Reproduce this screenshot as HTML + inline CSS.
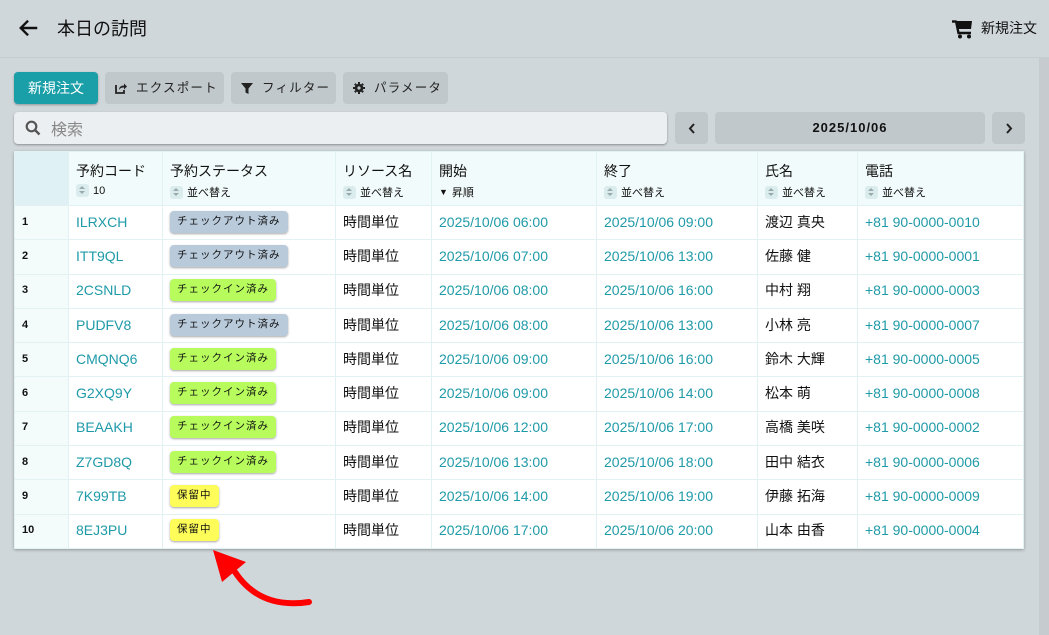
<!DOCTYPE html>
<html><head><meta charset="utf-8"><style>
*{box-sizing:border-box;margin:0;padding:0}
body{width:1049px;height:635px;background:#d0d7da;font-family:"Liberation Sans","Noto Sans CJK JP",sans-serif;position:relative;overflow:hidden;color:#111}
.hdr{position:absolute;left:0;top:0;width:1049px;height:58px;border-bottom:1px solid #c4ccd0}
.title{position:absolute;left:57px;top:15px;font-size:18px;color:#111}
.cart{position:absolute;left:981px;top:18px;font-size:14px}
.sb{position:absolute;left:1039px;top:58px;width:10px;height:577px;background:#c5cbce}
.btn{position:absolute;top:72px;height:32px;border-radius:4px;background:#c1c8cb;font-size:12.5px;letter-spacing:1.2px;line-height:32px;color:#222;white-space:nowrap;display:flex;align-items:center}
.btn svg{margin-right:9px}
.search{position:absolute;left:14px;top:112px;width:653px;height:32px;background:#ebeff1;border-radius:4px;box-shadow:0 1px 2px rgba(0,0,0,.35)}
.nav{position:absolute;top:112px;height:32px;background:#c1c8cb;border-radius:4px;text-align:center;line-height:32px;font-size:13px;font-weight:bold;letter-spacing:1px}
.nav svg{margin-top:11px}
table{position:absolute;left:14px;top:151px;width:1010px;border-collapse:collapse;background:#fff;box-shadow:0 1px 3px rgba(0,0,0,.3)}
td,th{border:1px solid #e2f1f2;text-align:left;font-weight:normal;padding:0 7px;font-size:14px;white-space:nowrap}
th{height:54px;background:#f2fbfb;vertical-align:top;padding-top:9px;font-size:14px}
th .s{font-size:11px;margin-top:3px;display:flex;align-items:center;gap:4px}
th .s i{display:inline-block;width:13px;height:13px;background:#dbecef;border-radius:3px;position:relative}
th .s i:before{content:"";position:absolute;left:3px;top:2px;border:3.5px solid transparent;border-bottom:3.5px solid #9aa;border-top:none}
th .s i:after{content:"";position:absolute;left:3px;top:7px;border:3.5px solid transparent;border-top:3.5px solid #9aa;border-bottom:none}
td{height:34.3px;padding-bottom:2px}
td.i{background:#f3fbfb;font-size:11px;font-weight:bold;width:54px}
th.i{background:#dff1f5}
.t{color:#1f9aa8}
.b{display:inline-block;font-size:10.5px;letter-spacing:1px;padding:0 7px;height:22px;line-height:21px;border-radius:4px;box-shadow:0 1px 2px rgba(0,0,0,.35)}
.o{background:#b9cadb}.g{background:#b7fc5c}.y{background:#fdfc58}
</style></head><body>
<div class="hdr"></div>
<svg style="position:absolute;left:18px;top:17px" width="22" height="22" viewBox="0 0 24 24"><path d="M21 12H4M11 4l-8 8 8 8" stroke="#111" stroke-width="2.6" fill="none"/></svg>
<div class="title">本日の訪問</div>
<svg style="position:absolute;left:952px;top:20px" width="22" height="19" viewBox="0 0 22 19"><path d="M0 1.5h4.5" stroke="#111" stroke-width="2.4"/><path d="M4 1h16l-1 8H6z" fill="#111"/><path d="M4 1l2.5 12H19" stroke="#111" stroke-width="2.4" fill="none"/><circle cx="8" cy="16.5" r="2" fill="#111"/><circle cx="17" cy="16.5" r="2" fill="#111"/></svg>
<div class="cart">新規注文</div>
<div class="sb"></div>
<div class="btn" style="left:14px;width:84px;background:#1a9fa8;color:#fff;justify-content:center;letter-spacing:0;font-size:14px;box-shadow:0 1px 2px rgba(0,0,0,.3)">新規注文</div>
<div class="btn" style="left:105px;width:119px;padding-left:10px"><svg width="12" height="12" viewBox="0 0 12 12"><path d="M1 3v8h8V8" stroke="#222" stroke-width="1.8" fill="none"/><path d="M4 8c0-3 2-4.5 5-4.5V1.5l3 3-3 3V5.5C7 5.5 5 6 4 8z" fill="#222"/></svg>エクスポート</div>
<div class="btn" style="left:231px;width:105px;padding-left:10px"><svg width="12" height="12" viewBox="0 0 12 12"><path d="M0 1h12L7.5 6.5V12l-3-1.5V6.5z" fill="#222"/></svg>フィルター</div>
<div class="btn" style="left:343px;width:105px;padding-left:10px"><svg width="12" height="12" viewBox="0 0 12 12"><circle cx="6" cy="6" r="4.3" fill="#222"/><path d="M6 0v12M0 6h12M1.8 1.8l8.4 8.4M10.2 1.8l-8.4 8.4" stroke="#222" stroke-width="2"/><circle cx="6" cy="6" r="1.6" fill="#c1c8cb"/></svg>パラメータ</div>
<div class="search"><svg style="position:absolute;left:11px;top:8px" width="16" height="16" viewBox="0 0 16 16"><circle cx="6.5" cy="6.5" r="4.8" stroke="#555" stroke-width="2.2" fill="none"/><path d="M10 10l4.5 4.5" stroke="#555" stroke-width="2.4"/></svg><span style="position:absolute;left:37px;top:4px;font-size:16px;color:#888">検索</span></div>
<div class="nav" style="left:675px;width:33px"><svg width="8" height="11" viewBox="0 0 8 11"><path d="M6 1L2 5.5 6 10" stroke="#222" stroke-width="2" fill="none"/></svg></div>
<div class="nav" style="left:715px;width:270px">2025/10/06</div>
<div class="nav" style="left:992px;width:33px"><svg width="8" height="11" viewBox="0 0 8 11"><path d="M2 1l4 4.5L2 10" stroke="#222" stroke-width="2" fill="none"/></svg></div>
<table>
<tr><th class="i"></th><th style="width:94px">予約コード<div class="s"><i></i>10</div></th><th style="width:173px">予約ステータス<div class="s"><i></i>並べ替え</div></th><th style="width:96px">リソース名<div class="s"><i></i>並べ替え</div></th><th style="width:165px">開始<div class="s"><span style="font-size:9px">▼</span>昇順</div></th><th style="width:161px">終了<div class="s"><i></i>並べ替え</div></th><th style="width:100px">氏名<div class="s"><i></i>並べ替え</div></th><th>電話<div class="s"><i></i>並べ替え</div></th></tr>
<tr><td class="i">1</td><td class="t">ILRXCH</td><td><span class="b o">チェックアウト済み</span></td><td>時間単位</td><td class="t">2025/10/06 06:00</td><td class="t">2025/10/06 09:00</td><td>渡辺 真央</td><td class="t">+81 90-0000-0010</td></tr>
<tr><td class="i">2</td><td class="t">ITT9QL</td><td><span class="b o">チェックアウト済み</span></td><td>時間単位</td><td class="t">2025/10/06 07:00</td><td class="t">2025/10/06 13:00</td><td>佐藤 健</td><td class="t">+81 90-0000-0001</td></tr>
<tr><td class="i">3</td><td class="t">2CSNLD</td><td><span class="b g">チェックイン済み</span></td><td>時間単位</td><td class="t">2025/10/06 08:00</td><td class="t">2025/10/06 16:00</td><td>中村 翔</td><td class="t">+81 90-0000-0003</td></tr>
<tr><td class="i">4</td><td class="t">PUDFV8</td><td><span class="b o">チェックアウト済み</span></td><td>時間単位</td><td class="t">2025/10/06 08:00</td><td class="t">2025/10/06 13:00</td><td>小林 亮</td><td class="t">+81 90-0000-0007</td></tr>
<tr><td class="i">5</td><td class="t">CMQNQ6</td><td><span class="b g">チェックイン済み</span></td><td>時間単位</td><td class="t">2025/10/06 09:00</td><td class="t">2025/10/06 16:00</td><td>鈴木 大輝</td><td class="t">+81 90-0000-0005</td></tr>
<tr><td class="i">6</td><td class="t">G2XQ9Y</td><td><span class="b g">チェックイン済み</span></td><td>時間単位</td><td class="t">2025/10/06 09:00</td><td class="t">2025/10/06 14:00</td><td>松本 萌</td><td class="t">+81 90-0000-0008</td></tr>
<tr><td class="i">7</td><td class="t">BEAAKH</td><td><span class="b g">チェックイン済み</span></td><td>時間単位</td><td class="t">2025/10/06 12:00</td><td class="t">2025/10/06 17:00</td><td>高橋 美咲</td><td class="t">+81 90-0000-0002</td></tr>
<tr><td class="i">8</td><td class="t">Z7GD8Q</td><td><span class="b g">チェックイン済み</span></td><td>時間単位</td><td class="t">2025/10/06 13:00</td><td class="t">2025/10/06 18:00</td><td>田中 結衣</td><td class="t">+81 90-0000-0006</td></tr>
<tr><td class="i">9</td><td class="t">7K99TB</td><td><span class="b y">保留中</span></td><td>時間単位</td><td class="t">2025/10/06 14:00</td><td class="t">2025/10/06 19:00</td><td>伊藤 拓海</td><td class="t">+81 90-0000-0009</td></tr>
<tr><td class="i">10</td><td class="t">8EJ3PU</td><td><span class="b y">保留中</span></td><td>時間単位</td><td class="t">2025/10/06 17:00</td><td class="t">2025/10/06 20:00</td><td>山本 由香</td><td class="t">+81 90-0000-0004</td></tr>
</table>
<svg style="position:absolute;left:205px;top:540px" width="110" height="75" viewBox="0 0 110 75"><path d="M104 62C78 66 50 62 30 32" stroke="#f00" stroke-width="6" fill="none" stroke-linecap="round"/><path d="M8 10L41 22 17 42Z" fill="#f00"/></svg>
</body></html>
